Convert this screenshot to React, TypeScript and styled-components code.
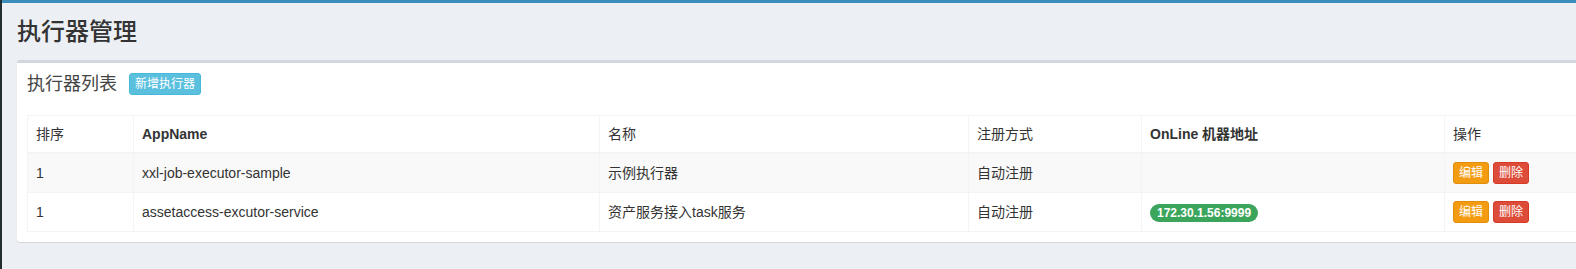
import React from "react";
import styled, { createGlobalStyle } from "styled-components";

const GlobalStyle = createGlobalStyle`
  html, body { margin: 0; padding: 0; overflow: hidden; }
  body {
    background: #ecf0f5;
    font-family: "Liberation Sans", "Noto Sans CJK SC", sans-serif;
    font-size: 14px;
    color: #333;
  }
`;

const Shell = styled.div`
  display: flex;
  width: 1672px;
  min-height: 269px;
`;

const Sidebar = styled.div`
  width: 2px;
  flex: none;
  background: #222d32;
`;

const Main = styled.div`
  flex: 1;
  display: flex;
  flex-direction: column;
`;

const TopBar = styled.div`
  height: 3px;
  background: #3c8dbc;
`;

const ContentHeader = styled.div`
  padding: 15px 15px 0;
`;

const Title = styled.h1`
  margin: 0;
  font-size: 24px;
  font-weight: 500;
  line-height: 27px;
  color: #333;
`;

const Content = styled.div`
  padding: 15px;
`;

const Box = styled.div`
  background: #fff;
  border-top: 3px solid #d2d6de;
  border-radius: 3px;
  box-shadow: 0 1px 1px rgba(0, 0, 0, 0.1);
`;

const BoxHeader = styled.div`
  display: flex;
  align-items: center;
  gap: 12px;
  padding: 10px;
`;

const BoxTitle = styled.h3`
  margin: 0;
  font-size: 18px;
  font-weight: 400;
  line-height: 1;
  color: #444;
`;

const BoxBody = styled.div`
  padding: 10px;
`;

const Btn = styled.button<{ $bg: string; $border: string }>`
  font-family: inherit;
  font-size: 12px;
  line-height: 18px;
  padding: 1px 5px;
  border-radius: 3px;
  border: 1px solid ${(p) => p.$border};
  background: ${(p) => p.$bg};
  color: #fff;
  cursor: pointer;
`;

const Actions = styled.div`
  display: flex;
  gap: 4px;
`;

const Table = styled.table`
  border-collapse: collapse;
  border: 1px solid #f4f4f4;
  table-layout: fixed;
  width: 1620px;
`;

const Th = styled.th<{ $w: number; $cjk?: boolean }>`
  box-sizing: border-box;
  width: ${(p) => p.$w}px;
  text-align: left;
  padding: 8px;
  line-height: 20px;
  font-weight: ${(p) => (p.$cjk ? 400 : 700)};
  border: 1px solid #f4f4f4;
  border-bottom-width: 2px;
`;

const Tr = styled.tr<{ $striped?: boolean }>`
  background: ${(p) => (p.$striped ? "#f9f9f9" : "#fff")};
`;

const Td = styled.td`
  padding: 8px;
  line-height: 22px;
  vertical-align: top;
  border: 1px solid #f4f4f4;
`;

const Badge = styled.span`
  display: inline-block;
  font-size: 12px;
  font-weight: 700;
  line-height: 1;
  padding: 3px 7px;
  border-radius: 10px;
  background: #3ca55c;
  color: #fff;
  vertical-align: middle;
`;

const cols = [
  { label: "排序", w: 106, cjk: true },
  { label: "AppName", w: 466 },
  { label: "名称", w: 369, cjk: true },
  { label: "注册方式", w: 173, cjk: true },
  { label: "OnLine 机器地址", w: 303 },
  { label: "操作", w: 203, cjk: true },
];

const rows = [
  { order: "1", app: "xxl-job-executor-sample", name: "示例执行器", type: "自动注册", addr: "" },
  { order: "1", app: "assetaccess-excutor-service", name: "资产服务接入task服务", type: "自动注册", addr: "172.30.1.56:9999" },
];

export default function App() {
  return (
    <>
      <GlobalStyle />
      <Shell>
        <Sidebar />
        <Main>
          <TopBar />
          <ContentHeader>
            <Title>执行器管理</Title>
          </ContentHeader>
          <Content>
            <Box>
              <BoxHeader>
                <BoxTitle>执行器列表</BoxTitle>
                <Btn $bg="#5bc0de" $border="#46b8da">新增执行器</Btn>
              </BoxHeader>
              <BoxBody>
                <Table>
                  <thead>
                    <tr>
                      {cols.map((c) => (
                        <Th key={c.label} $w={c.w} $cjk={c.cjk}>
                          {c.label}
                        </Th>
                      ))}
                    </tr>
                  </thead>
                  <tbody>
                    {rows.map((r, i) => (
                      <Tr key={i} $striped={i % 2 === 0}>
                        <Td>{r.order}</Td>
                        <Td>{r.app}</Td>
                        <Td>{r.name}</Td>
                        <Td>{r.type}</Td>
                        <Td>{r.addr && <Badge>{r.addr}</Badge>}</Td>
                        <Td>
                          <Actions>
                            <Btn $bg="#f39c12" $border="#e08e0b">编辑</Btn>
                            <Btn $bg="#dd4b39" $border="#d73925">删除</Btn>
                          </Actions>
                        </Td>
                      </Tr>
                    ))}
                  </tbody>
                </Table>
              </BoxBody>
            </Box>
          </Content>
        </Main>
      </Shell>
    </>
  );
}
